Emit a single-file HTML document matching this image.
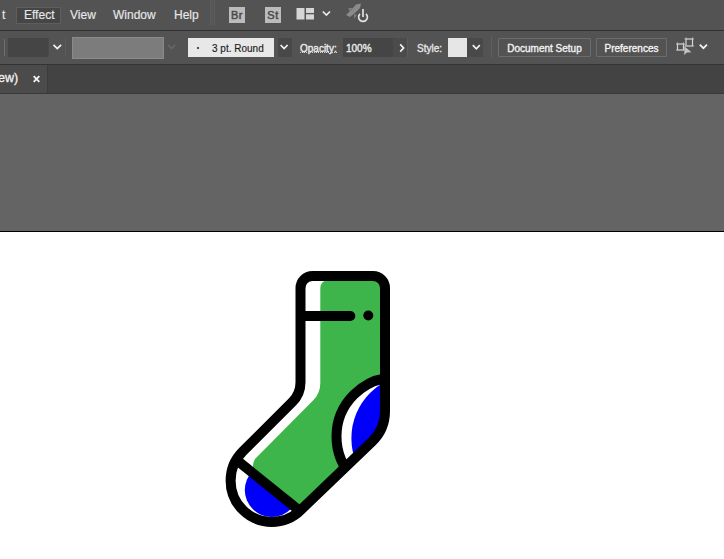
<!DOCTYPE html>
<html><head><meta charset="utf-8">
<style>
*{margin:0;padding:0;box-sizing:border-box}
html,body{width:724px;height:559px;overflow:hidden;background:#fff;font-family:"Liberation Sans",sans-serif}
.a{position:absolute}
#menubar{left:0;top:0;width:724px;height:30px;background:#535353}
#mline{left:0;top:30px;width:724px;height:1px;background:#3c3c3c}
#toolbar{left:0;top:31px;width:724px;height:33px;background:#535353}
#tline{left:0;top:63px;width:724px;height:1px;background:#3a3a3a}
#tabbar{left:0;top:65px;width:724px;height:28px;background:#434343}
#canvas{left:0;top:94px;width:724px;height:137px;background:#646464}
#cline{left:0;top:231px;width:724px;height:1px;background:#000}
.mt{color:#e8e8e8;font-size:12px;line-height:14px;top:8px;-webkit-text-stroke:0.15px #e8e8e8}
.tt{color:#ececec;font-size:10px;line-height:12px;-webkit-text-stroke:0.35px #ececec}
.tk{font-size:10px;line-height:12px}
.ic{top:7px;width:16px;height:16px;background:#bcbcbc;color:#4a4a4a;font-size:11px;line-height:16px;text-align:center;letter-spacing:0.5px;-webkit-text-stroke:0.5px #4a4a4a}
.btn{border:1px solid #6c6c6c;background:#535353;border-radius:1px;color:#f2f2f2;font-size:10px;text-align:center;line-height:19px;-webkit-text-stroke:0.35px #f2f2f2}
</style></head><body>
<div id="menubar" class="a"></div>
<div class="a" style="left:0;top:30px;width:724px;height:1px;background:#2f2f2f"></div>
<div class="a mt" style="left:2px">t</div>
<div class="a" style="left:16px;top:7px;width:45px;height:17px;background:#464646;border:1px solid #5e5e5e"></div>
<div class="a mt" style="left:24px">Effect</div>
<div class="a mt" style="left:70px">View</div>
<div class="a mt" style="left:113px">Window</div>
<div class="a mt" style="left:174px">Help</div>
<div class="a" style="left:210px;top:0px;width:5px;height:25px;background:#575757;border-left:1px solid #5c5c5c;border-right:1px solid #5c5c5c"></div>
<div class="a ic" style="left:229px">Br</div>
<div class="a ic" style="left:265px">St</div>
<svg class="a" style="left:290px;top:0" width="90" height="30" viewBox="290 0 90 30">
 <rect x="296.5" y="8" width="8" height="11.5" fill="#d6d6d6"/>
 <rect x="306" y="8" width="8" height="5" fill="#d6d6d6"/>
 <rect x="306" y="14.3" width="8" height="5.2" fill="#d6d6d6"/>
 <path d="M322.8 11.5 L326.4 15 L330 11.5" stroke="#ececec" stroke-width="1.7" fill="none"/>
 <path d="M346 15 L352 9 L356 4.5 L361 3.5 L360 8 L355 13 L350 17 Z" fill="#8a8a8a"/>
 <path d="M348 8 L353 8 L350 12 Z M354 14 L354 19 L357 15 Z" fill="#7a7a7a"/>
 <path d="M360 13.8 A 4.4 4.4 0 1 0 366 13.8" stroke="#e2e2e2" stroke-width="1.7" fill="none"/>
 <path d="M363 9 L363 17" stroke="#e2e2e2" stroke-width="1.7"/>
</svg>

<div id="toolbar" class="a"></div>
<div class="a" style="left:4px;top:39px;width:1px;height:17px;background:#6e6e6e"></div>
<div class="a" style="left:8px;top:38px;width:40px;height:19px;background:#454545"></div>
<div class="a" style="left:48px;top:38px;width:18px;height:19px;border-left:1px solid #4a4a4a;border-right:1px solid #5c5c5c"></div>
<div class="a" style="left:72px;top:37px;width:92px;height:22px;background:#7c7c7c;border:1px solid #8a8a8a"></div>
<div class="a" style="left:188px;top:38px;width:86px;height:19px;background:#e8e8e8"></div>
<div class="a" style="left:196.5px;top:46.5px;width:2.5px;height:2.5px;border-radius:50%;background:#1a1a1a"></div>
<div class="a tk" style="left:212px;top:43px;color:#1c1c1c;-webkit-text-stroke:0.15px #1c1c1c">3 pt. Round</div>
<div class="a" style="left:278px;top:38px;width:14px;height:19px;background:#484848"></div>
<div class="a tt" style="left:300px;top:43px">Opacity:</div>
<div class="a" style="left:300px;top:52px;width:37px;height:1px;border-top:1px dotted #d0d0d0"></div>
<div class="a" style="left:343px;top:38px;width:50px;height:19px;background:#454545"></div>
<div class="a tt" style="left:346px;top:43px">100%</div>
<div class="a" style="left:393px;top:38px;width:15px;height:19px;background:#4b4b4b;border-right:1px solid #5c5c5c"></div>
<div class="a tt" style="left:417px;top:43px;color:#dcdcdc">Style:</div>
<div class="a" style="left:448px;top:38px;width:19px;height:19px;background:#e6e6e6"></div>
<div class="a" style="left:467px;top:38px;width:16px;height:19px;background:#494949"></div>
<div class="a" style="left:491px;top:36px;width:1px;height:22px;background:#5e5e5e"></div>
<div class="a btn" style="left:498px;top:38px;width:93px;height:19px">Document Setup</div>
<div class="a btn" style="left:596px;top:38px;width:71px;height:19px">Preferences</div>
<svg class="a" style="left:0;top:31px" width="724" height="33" viewBox="0 31 724 33">
 <path d="M53.5 44.8 L57.3 48.6 L61.1 44.8" stroke="#f2f2f2" stroke-width="1.7" fill="none"/>
 <path d="M168 45 L171.5 48.5 L175 45" stroke="#6a6a6a" stroke-width="1.3" fill="none"/>
 <path d="M280.6 45 L284.1 48.6 L287.6 45" stroke="#f2f2f2" stroke-width="1.7" fill="none"/>
 <path d="M400.2 44.3 L403.6 48 L400.2 51.7" stroke="#f2f2f2" stroke-width="1.7" fill="none"/>
 <path d="M472.8 45.2 L476.3 48.8 L479.8 45.2" stroke="#f2f2f2" stroke-width="1.7" fill="none"/>
 <path d="M699.8 44.6 L703.4 48.2 L707 44.6" stroke="#f2f2f2" stroke-width="1.7" fill="none"/>
 <rect x="677.5" y="44" width="6" height="6" stroke="#d4d4d4" stroke-width="1.2" fill="none"/>
 <rect x="686" y="39" width="6.5" height="7" stroke="#d4d4d4" stroke-width="1.2" fill="none"/>
 <path d="M676 44 h1.5 M676 50 h1.5 M683.5 44 h1.5 M677.5 42.5 v1.5 M683.5 42.5 v1.5 M684.5 39 h1.5 M692.5 39 h1.5 M684.5 46 h1.5 M692.5 46 h1.5 M686 37.5 v1.5 M692.5 37.5 v1.5" stroke="#bdbdbd" stroke-width="1"/>
 <path d="M684.3 46.2 L684.3 55 L686.8 52.6 L691.5 52.2 Z" fill="#c4c4c4"/>
</svg>
<div class="a" style="left:0;top:64px;width:724px;height:1px;background:#333"></div>

<div id="tabbar" class="a"></div>
<div class="a" style="left:0;top:65px;width:48px;height:28px;background:#4b4b4b;border-right:1px solid #3c3c3c"></div>
<div class="a" style="left:0;top:93px;width:724px;height:1px;background:#393939"></div>
<div class="a mt" style="left:-2px;top:71px;color:#f2f2f2;font-size:12.5px;-webkit-text-stroke:0.3px #f2f2f2">ew)</div>
<svg class="a" style="left:30px;top:70px" width="14" height="16" viewBox="30 70 14 16">
 <path d="M33.7 76.2 L39.3 81.8 M39.3 76.2 L33.7 81.8" stroke="#f2f2f2" stroke-width="1.9"/>
</svg>
<div id="canvas" class="a"></div>
<div id="cline" class="a"></div>

<!--SOCK--><svg class="a" style="left:0;top:0" width="724" height="559" viewBox="0 0 724 559">
 <defs>
  <clipPath id="sock"><path d="M 300.5 288.0 A 12 12 0 0 1 312.5 276.0 L 373.0 276.0 A 12 12 0 0 1 385.0 288.0 L 385.00 411.37 A 42 42 0 0 1 372.05 441.70 L 300.93 509.83 A 41.2 41.2 0 0 1 242.67 509.83 A 41.2 41.2 0 0 1 242.67 451.57 L 292.30 402.00 A 28 28 0 0 0 300.50 382.20 Z"/></clipPath>
  <clipPath id="heel"><circle cx="395.5" cy="436.5" r="59"/></clipPath>
  <clipPath id="toe"><path d="M 190 407 L 250 470.8 L 330 535 L 190 560 Z"/></clipPath>
 </defs>
 <g clip-path="url(#sock)">
  <path fill="#3db54a" d="M 320.3 288 A 8 8 0 0 1 328.3 280 L 400 280 L 400 520.9 L 312.3 520.9 L 262 480.3 Q 248.5 469.5 255 459 L 313.27 400.23 A 24 24 0 0 0 320.30 383.26 Z"/>
  <circle cx="395.5" cy="436.5" r="59" fill="#fff"/>
  <circle cx="415.8" cy="438.2" r="64.4" fill="#0000fa" clip-path="url(#heel)"/>
  <circle cx="271.8" cy="490" r="27" fill="#0000fa" clip-path="url(#toe)"/>
 </g>
 <g fill="none" stroke="#000" stroke-width="10">
  <path d="M 300.5 288.0 A 12 12 0 0 1 312.5 276.0 L 373.0 276.0 A 12 12 0 0 1 385.0 288.0 L 385.00 411.37 A 42 42 0 0 1 372.05 441.70 L 300.93 509.83 A 41.2 41.2 0 0 1 242.67 509.83 A 41.2 41.2 0 0 1 242.67 451.57 L 292.30 402.00 A 28 28 0 0 0 300.50 382.20 Z" stroke-linejoin="round"/>
  <path d="M 300 316 L 350.3 316"/><circle cx="350.3" cy="316" r="5" fill="#000" stroke="none"/>
  <path d="M 238.3 461.4 L 301 511.9"/>
 </g>
 <g clip-path="url(#sock)"><circle cx="395.5" cy="436.5" r="59" fill="none" stroke="#000" stroke-width="10"/></g>
 <circle cx="368.3" cy="315.5" r="5" fill="#000"/>
</svg><!--/SOCK-->
</body></html>
